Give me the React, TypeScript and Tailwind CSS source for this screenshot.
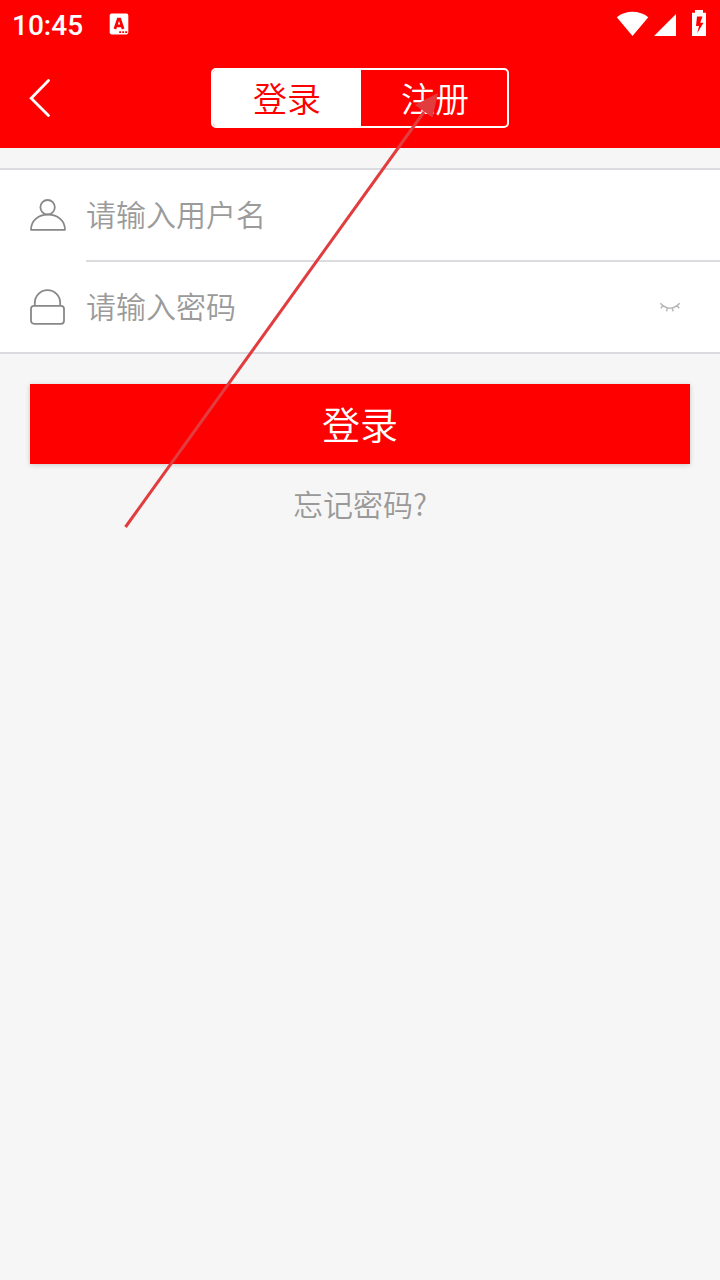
import React from 'react';

interface FieldProps {
  icon: React.ReactNode;
  label: string;
  divider?: boolean;
  action?: React.ReactNode;
}

/* Status bar */
function StatusBar() {
  return (
    <div className="flex h-12 items-center text-white">
      <span className="ml-3 w-[97px] pt-1 font-[Roboto,sans-serif] text-[28px] leading-8 font-medium">
        10:45
      </span>
      <svg className="h-5 w-5 overflow-visible" viewBox="0 0 20 20">
        <rect x="0.7" y="-0.4" width="18.6" height="20.8" rx="1.8" fill="#fff" />
        <path d="M5.9 15L9.2 5h1.6L14.1 15M7.3 11.8h5.4" fill="none" stroke="#f00" strokeWidth="2.7" />
        <path d="M10.2 17.2h1.9v1.8h-1.9zM13.2 17.2h1.9v1.8h-1.9zM16.2 17.2h1.9v1.8h-1.9z" fill="#f00" />
      </svg>
      <svg className="ml-auto h-12 w-[104px]" viewBox="0 0 104 48" fill="#fff">
        <path d="M0.8 17.2C9.5 9.8 23.5 9.8 32.3 17.2L16.5 36z" />
        <path d="M38 36L60 14v22z" />
        <path d="M79 10h8v2.7h3V36H76V12.7h3zM81 16.5l-1 9.5h3L81.2 33.3l6.3-10.6h-3.3L86.5 16.5z" fillRule="evenodd" />
      </svg>
    </div>
  );
}

/* Header with login / register switch */
function Header() {
  return (
    <header className="h-[148px] bg-[#f00]">
      <StatusBar />
      <div className="grid h-[100px] grid-cols-[211px_298px_211px] items-center">
        <svg className="ml-7 h-10 w-6" viewBox="0 0 24 40">
          <path d="M20.5 2.5L3.2 20.2L20.5 37.5" fill="none" stroke="#fff" strokeWidth="2.8" strokeLinecap="round" />
        </svg>
        <div className="flex h-[60px] overflow-hidden rounded-[5px] border-2 border-white text-[34px] leading-[56px]">
          <button className="w-[148px] bg-white text-[#f00]">登录</button>
          <button className="w-[146px] pl-0.5 text-white">注册</button>
        </div>
      </div>
    </header>
  );
}

function UserIcon() {
  return (
    <svg className="h-9 w-9" viewBox="0 0 36 36" fill="none" stroke="#888" strokeWidth="1.8">
      <circle cx="17.6" cy="9.2" r="7.2" />
      <path d="M1 31.8C1 22.8 8 16.6 18 16.6S35 22.8 35 31.8z" strokeLinejoin="round" />
    </svg>
  );
}

function LockIcon() {
  return (
    <svg className="mb-0.5 h-9 w-9" viewBox="0 0 36 36" fill="none" stroke="#888" strokeWidth="1.8">
      <rect x="1" y="16.8" width="33" height="18" rx="3" />
      <path d="M4.8 16.8v-3a12.7 12.7 0 0 1 25.4 0v3" />
    </svg>
  );
}

function ClosedEyeIcon() {
  return (
    <svg className="h-3 w-5" viewBox="0 0 20 12" fill="none" stroke="#b4b4b4" strokeWidth="1.4">
      <path d="M0.3 1.2Q10 11 19.7 1.2M2.8 3.8L0.8 6.2M17.2 3.8l2 2.4M7.3 6.2l-.8 3.2M12.3 6.2l.8 3.2" />
    </svg>
  );
}

function Field({ icon, label, divider, action }: FieldProps) {
  return (
    <div className="flex h-[92px] pl-[30px]">
      <div className="flex w-14 items-center">{icon}</div>
      <div className={`flex flex-1 items-center ${divider ? 'border-b-2 border-[#dcdce0]' : ''}`}>
        <span className={`text-[30px] leading-9 text-[#9b9b9b] ${divider ? 'pb-1' : 'pb-1.5'}`}>{label}</span>
        {action && <div className="mr-10 ml-auto">{action}</div>}
      </div>
    </div>
  );
}

/* Arrow pointing at the register tab */
function HintArrow() {
  return (
    <svg className="pointer-events-none absolute top-0 left-0 h-[560px] w-[720px]" viewBox="0 0 720 560">
      <path d="M125.5 527L424 112" stroke="#e13c3e" strokeWidth="3" />
      <path d="M438 93L415 105L432.5 117.5z" fill="#e13c3e" />
    </svg>
  );
}

export default function App() {
  return (
    <div className="relative h-[1280px] w-[720px] overflow-hidden bg-[#f6f6f6] font-['Noto_Sans_CJK_SC',sans-serif] font-[350]">
      <Header />
      <main className="pt-5">
        <section className="border-y-2 border-[#dcdce0] bg-white">
          <Field icon={<UserIcon />} label="请输入用户名" divider />
          <div className="-mb-[2px]">
            <Field icon={<LockIcon />} label="请输入密码" action={<ClosedEyeIcon />} />
          </div>
        </section>
        <div className="px-[30px] pt-[30px] text-center">
          <button className="h-20 w-full bg-[#f00] pb-0.5 text-[38px] leading-[78px] text-white shadow-[0_1px_5px_rgba(0,0,0,0.18)]">
            登录
          </button>
          <a className="mt-[19px] block text-[30px] leading-10 text-[#999]">忘记密码?</a>
        </div>
      </main>
      <HintArrow />
    </div>
  );
}
